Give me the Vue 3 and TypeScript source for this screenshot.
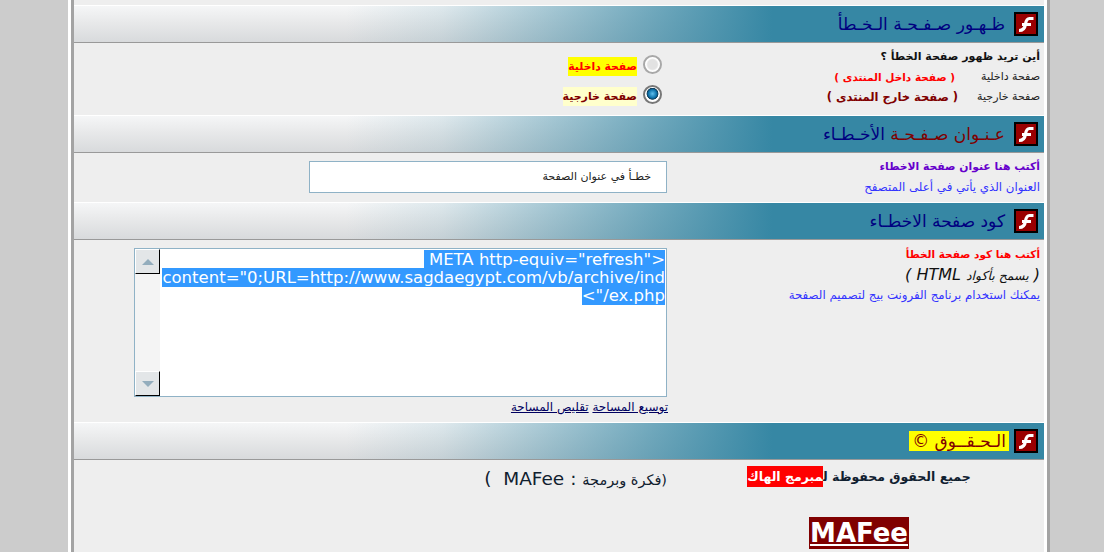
<template>
  <div class="page">
    <div class="frame">
      <main class="panel" dir="rtl">
        <header class="bar">
          <svg class="flash" viewBox="0 0 24 24" aria-hidden="true"><rect x="1" y="1" width="22" height="22" /><path :d="flashPath" /></svg>
          <h2 class="navy">ظـهـور صـفـحـة الـخـطأ</h2>
        </header>
        <section class="row row-where">
          <div class="hint">
            <p class="strong">أين تريد ظهور صفحة الخطأ ؟</p>
            <p class="option-line"><span class="plain">صفحة داخلية</span><b class="red wide">( صفحة داخل المنتدى )</b></p>
            <p class="option-line"><span class="plain">صفحة خارجية</span><b class="maroon">( صفحة خارج المنتدى )</b></p>
          </div>
          <div class="field radios">
            <label class="radio-line"><span class="radio" /><b class="tag-yellow">صفحة داخلية</b></label>
            <label class="radio-line"><span class="radio radio--on" /><b class="tag-pale">صفحة خارجية</b></label>
          </div>
        </section>

        <header class="bar">
          <svg class="flash" viewBox="0 0 24 24" aria-hidden="true"><rect x="1" y="1" width="22" height="22" /><path :d="flashPath" /></svg>
          <h2><span class="maroon">عـنـوان صـفـحـة</span> <span class="navy">الأخـطـاء</span></h2>
        </header>
        <section class="row row-title">
          <div class="hint">
            <p class="strong purple">أكتب هنا عنوان صفحة الاخطاء</p>
            <p class="blue">العنوان الذي يأتي في أعلى المتصفح</p>
          </div>
          <div class="field">
            <div class="text-input">خطـأ في عنوان الصفحة</div>
          </div>
        </section>

        <header class="bar">
          <svg class="flash" viewBox="0 0 24 24" aria-hidden="true"><rect x="1" y="1" width="22" height="22" /><path :d="flashPath" /></svg>
          <h2 class="navy">كود صفحة الاخطـاء</h2>
        </header>
        <section class="row row-code">
          <div class="hint">
            <p class="strong red">أكتب هنا كود صفحة الخطأ</p>
            <p class="allowed">( <i class="small">يسمح بأكواد</i> HTML )</p>
            <p class="blue tight">يمكنك استخدام برنامج الفرونت بيج لتصميم الصفحة</p>
          </div>
          <div class="field">
            <div class="code-box">
              <div class="code-text"><span class="selected">{{ codeText }}</span></div>
              <div class="scrollbar" aria-hidden="true">
                <span class="scroll-btn"><span class="arrow-up" /></span>
                <span class="scroll-track" />
                <span class="scroll-btn"><span class="arrow-down" /></span>
              </div>
            </div>
            <div class="resize-links"><a href="#">توسيع المساحة</a> <a href="#">تقليص المساحة</a></div>
          </div>
        </section>

        <header class="bar">
          <svg class="flash" viewBox="0 0 24 24" aria-hidden="true"><rect x="1" y="1" width="22" height="22" /><path :d="flashPath" /></svg>
          <h2 class="maroon rights-title"><span class="tag-yellow">الـحـقــوق ©</span></h2>
        </header>
        <section class="row row-rights">
          <div class="credits">
            <p class="rights-line">جميع الحقوق محفوظة ل<span class="tag-red">مبرمج الهاك</span></p>
            <a class="brand" href="#">MAFee</a>
          </div>
          <div class="field idea"><span class="idea-ar">(فكرة وبرمجة</span> : MAFee &nbsp;)</div>
        </section>
      </main>
    </div>
  </div>
</template>

<script setup lang="ts">
const flashPath = 'M19.5 6.5H15.5C12.5 6.5 12 9 11.5 12C11 16 9 18.5 5 18.5M8 12.5H17'

const codeText = '<META http-equiv="refresh" content="0;URL=http://www.sagdaegypt.com/vb/archive/index.php/">'
</script>

<style>
html,
body {
  margin: 0;
  height: 552px;
  overflow: hidden;
  background: #ccc;
}
</style>

<style scoped>
.page {
  height: 552px;
  padding-left: 68px;
  overflow: hidden;
  font-family: "DejaVu Sans", "Liberation Sans", sans-serif;
}

.frame {
  width: 976px;
  height: 552px;
  border-left: 3px solid #fff;
  border-right: 3px solid #a3a3a3;
}

.panel {
  box-sizing: border-box;
  width: 976px;
  height: 552px;
  padding-top: 5px;
  border-left: 3px solid #a3a3a3;
  border-right: 3px solid #fff;
  background: #eee;
}

p {
  margin: 0;
}

.bar {
  display: flex;
  align-items: center;
  gap: 9px;
  box-sizing: border-box;
  height: 38px;
  padding: 0 6px 0 0;
  border-top: 1px solid #fff;
  border-bottom: 1px solid #999;
  background:
    linear-gradient(to left, #3687a4 0, #3687a4 28%, rgb(54 135 164 / 70%) 40%, rgb(54 135 164 / 12%) 62%, rgb(54 135 164 / 0%) 72%),
    linear-gradient(to bottom, #f5f6f7, #e8e9ea 45%, #d8dadc);
}

.bar h2 {
  margin: 0;
  font-size: 17px;
  font-weight: 400;
  line-height: 20px;
  white-space: nowrap;
}

.bar .rights-title {
  margin-right: -4px;
}

.flash {
  width: 24px;
  height: 24px;
  flex: 0 0 24px;
}

.flash rect {
  fill: #990000;
  stroke: #000;
  stroke-width: 2;
}

.flash path {
  fill: none;
  stroke: #fff;
  stroke-width: 3.2;
}

.row {
  display: grid;
  grid-template-columns: 370px 1fr;
}

.row-where {
  height: 72px;
}

.row-title {
  height: 49px;
}

.row-code {
  height: 182px;
}

.row-rights {
  height: 92px;
}

.hint {
  padding: 4px 4px 0 0;
  font-size: 11px;
  line-height: 20px;
  color: #111;
  white-space: nowrap;
}

.strong {
  font-weight: 700;
  color: #111;
}

.option-line {
  display: flex;
}

.plain {
  width: 82px;
  color: #222;
}

.wide {
  padding-right: 3px;
}

.option-line .maroon {
  font-size: 11.5px;
}

.navy {
  color: #000080;
}

.maroon {
  color: #800000;
}

.red {
  color: #f00;
}

.hint .purple {
  font-size: 10.8px;
  color: #6600cc;
}

.hint .red {
  font-size: 10.5px;
  color: #f00;
}

.blue {
  font-size: 11.8px;
  color: #3333ff;
}

.tight {
  line-height: 16px;
}

.allowed {
  font-size: 16px;
  font-style: italic;
  line-height: 22px;
}

.small {
  font-size: 12.5px;
}

.field {
  padding: 8px 7px 0 0;
}

.radios {
  display: grid;
  align-content: start;
  gap: 11px;
  padding: 12px 12px 0 0;
}

.radio-line {
  display: flex;
  align-items: center;
  gap: 6px;
  height: 19px;
  font-size: 11px;
}

.radio {
  box-sizing: border-box;
  width: 19px;
  height: 19px;
  border: 2px solid #a8a8a8;
  border-radius: 50%;
  background: radial-gradient(circle, #e2e2e2 0 45%, #fff 60%);
}

.radio--on {
  border-color: #777;
  background: radial-gradient(circle at 50% 45%, #5fc0ee 0, #0b6fa8 38%, #103a55 50%, #fff 56%);
}

.radio-line b {
  line-height: 19px;
  margin-top: 4px;
}

.tag-yellow {
  background: #ff0;
}

.bar .tag-yellow {
  padding: 0 3px;
}

.radio-line .tag-yellow {
  color: #f00;
  font-size: 10.8px;
}

.tag-pale {
  background: #ffc;
  color: #800000;
}

.tag-red {
  padding: 3px 0;
  background: #f00;
  color: #fff;
}

.text-input {
  box-sizing: border-box;
  width: 358px;
  height: 32px;
  padding: 0 15px 0 4px;
  border: 1px solid #8fb2c6;
  background: #fff;
  color: #222;
  font-size: 11px;
  line-height: 30px;
}

.code-box {
  display: flex;
  box-sizing: border-box;
  width: 533px;
  height: 149px;
  border: 1px solid #8fb2c6;
  background: #fff;
}

.code-text {
  flex: 1;
  min-width: 0;
  padding: 2px 1px 0 1px;
  font-size: 16.5px;
  line-height: 18px;
  white-space: pre-wrap;
  overflow-wrap: anywhere;
  color: #fff;
}

.selected {
  background: #39f;
}

.scrollbar {
  display: flex;
  flex-direction: column;
  width: 25px;
  background: #f4f4f4;
}

.scroll-btn {
  display: grid;
  box-sizing: border-box;
  height: 25px;
  place-items: center;
  border-top: 1px solid #fff;
  border-left: 1px solid #fff;
  border-bottom: 1px solid #000;
  border-right: 1px solid #000;
  background: #e3e6e8;
}

.scroll-track {
  flex: 1;
}

.arrow-up,
.arrow-down {
  width: 0;
  height: 0;
  border-left: 6px solid transparent;
  border-right: 6px solid transparent;
}

.arrow-up {
  border-bottom: 6px solid #93adbd;
}

.arrow-down {
  border-top: 6px solid #93adbd;
}

.resize-links {
  margin: 2px -1px 0 0;
  font-size: 12px;
  line-height: 16px;
}

.resize-links a {
  color: #000060;
}

.credits {
  display: flex;
  flex-direction: column;
  align-items: center;
}

.rights-line {
  margin-top: 6px;
  font-size: 12.5px;
  font-weight: 700;
  line-height: 22px;
  color: #102030;
}

.brand {
  margin-top: 29px;
  padding: 0 1px;
  background: #800000;
  color: #fff;
  font-size: 26px;
  font-weight: 700;
  line-height: 32px;
}

.idea {
  padding-top: 8px;
  font-size: 18.5px;
  line-height: 22px;
  color: #10202e;
}

.idea-ar {
  font-size: 14.5px;
}
</style>
